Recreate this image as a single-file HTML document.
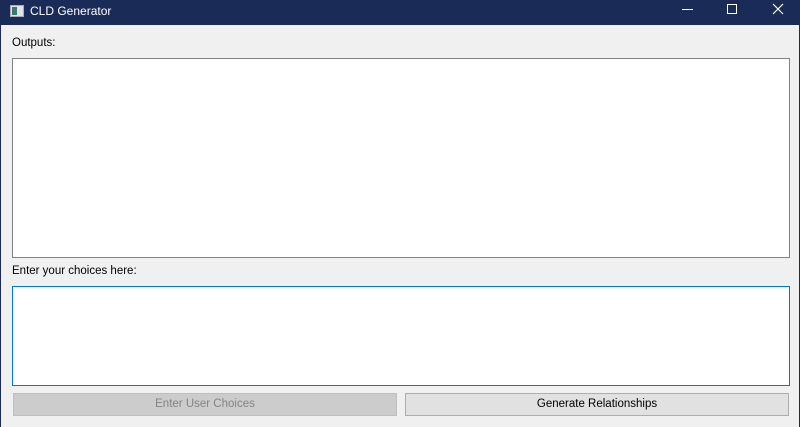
<!DOCTYPE html>
<html><head><style>
body{margin:0;width:800px;height:427px;background:#f0f0f0;position:relative;overflow:hidden;font-family:"Segoe UI","Liberation Sans",sans-serif;font-size:11.5px;color:#000}
.tb{position:absolute;left:0;top:0;width:800px;height:25px;background:#1b2b58;color:#fff}
.lb{position:absolute;left:0;top:25px;width:1px;height:402px;background:#1b2b58}
.rb{position:absolute;right:0;top:25px;width:1px;height:402px;background:#1b2b58}
.a{position:absolute;box-sizing:border-box}
</style></head><body>
<div class="tb">
 <div class="a" style="left:10px;top:5px;width:14px;height:12px;background:#dfe4e8;border:1px solid #aab"><div class="a" style="left:1px;top:1px;width:5px;height:8px;background:#3a7a6a"></div></div>
 <div class="a" style="left:30px;top:4px;font-size:12px">CLD Generator</div>
 <div class="a" style="left:682px;top:9px;width:11px;height:1px;background:#fff"></div>
 <div class="a" style="left:727px;top:4px;width:10px;height:10px;border:1px solid #fff"></div>
 <svg class="a" style="left:772px;top:3px" width="12" height="12"><path d="M1 1L11 11M11 1L1 11" stroke="#fff" stroke-width="1.2"/></svg>
</div>
<div class="lb"></div><div class="rb"></div>
<div class="a" style="left:12px;top:37px">Outputs:</div>
<div class="a" style="left:12px;top:58px;width:778px;height:200px;background:#fff;border:1px solid #828282"></div>
<div class="a" style="left:12px;top:265px">Enter your choices here:</div>
<div class="a" style="left:12px;top:286px;width:778px;height:100px;background:#fff;border:1px solid #0078d7"></div>
<div class="a" style="left:13px;top:393px;width:384px;height:23px;background:#cccccc;border:1px solid #bfbfbf;color:#838383;text-align:center;line-height:21px">Enter User Choices</div>
<div class="a" style="left:405px;top:393px;width:384px;height:23px;background:#e1e1e1;border:1px solid #adadad;text-align:center;line-height:21px">Generate Relationships</div>
</body></html>
